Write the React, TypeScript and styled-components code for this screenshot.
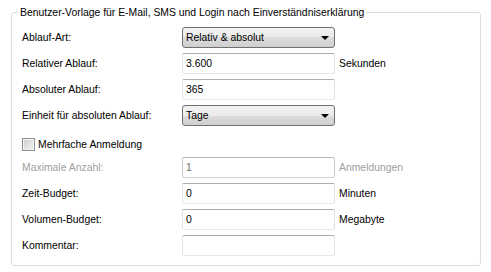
import React from "react";
import styled, { createGlobalStyle } from "styled-components";

const GlobalStyle = createGlobalStyle`
  html, body {
    margin: 0;
    padding: 0;
    background: #fff;
  }
  body {
    font-family: "Liberation Sans", Arial, sans-serif;
    font-size: 10.4px;
    color: #000;
  }
`;

type Row =
  | { kind: "select"; label: string; value: string }
  | { kind: "input"; label: string; value: string; unit?: string; disabled?: boolean }
  | { kind: "check"; label: string };

const rows: Row[] = [
  { kind: "select", label: "Ablauf-Art:", value: "Relativ & absolut" },
  { kind: "input", label: "Relativer Ablauf:", value: "3.600", unit: "Sekunden" },
  { kind: "input", label: "Absoluter Ablauf:", value: "365" },
  { kind: "select", label: "Einheit für absoluten Ablauf:", value: "Tage" },
  { kind: "check", label: "Mehrfache Anmeldung" },
  { kind: "input", label: "Maximale Anzahl:", value: "1", unit: "Anmeldungen", disabled: true },
  { kind: "input", label: "Zeit-Budget:", value: "0", unit: "Minuten" },
  { kind: "input", label: "Volumen-Budget:", value: "0", unit: "Megabyte" },
  { kind: "input", label: "Kommentar:", value: "" },
];

export default function App() {
  return (
    <Page>
      <GlobalStyle />
      <Group>
        <Legend>Benutzer-Vorlage für E-Mail, SMS und Login nach Einverständniserklärung</Legend>
        <Form>
          {rows.map((row, i) => {
            if (row.kind === "check") {
              return (
                <CheckRow key={i}>
                  <CheckBox />
                  <span>{row.label}</span>
                </CheckRow>
              );
            }
            const disabled = row.kind === "input" && !!row.disabled;
            return (
              <React.Fragment key={i}>
                <Label disabled={disabled}>{row.label}</Label>
                {row.kind === "select" ? (
                  <Combo>
                    <span>{row.value}</span>
                    <Arrow />
                  </Combo>
                ) : (
                  <TextBox disabled={disabled}>{row.value}</TextBox>
                )}
                <Unit disabled={disabled}>{row.kind === "input" ? row.unit : ""}</Unit>
              </React.Fragment>
            );
          })}
        </Form>
      </Group>
    </Page>
  );
}

const Page = styled.div`
  width: 491px;
  height: 272px;
  padding: 6px 0 0 11px;
  box-sizing: border-box;
`;

const Group = styled.fieldset`
  margin: 0;
  width: 470px;
  box-sizing: border-box;
  border: 1px solid #d5dfe5;
  border-radius: 3px;
  padding: 8px 0 9px 10px;
  height: 260px;
`;

const Legend = styled.legend`
  margin-left: -4px;
  padding: 0 2px;
  line-height: 13px;
`;

const Form = styled.div`
  display: grid;
  grid-template-columns: 156px 153px auto;
  grid-auto-rows: 21px;
  row-gap: 5px;
  column-gap: 4px;
  align-items: center;
`;

const Label: any = styled.div<{ disabled?: boolean }>`
  color: ${(p) => (p.disabled ? "#a0a0a0" : "#000")};
  white-space: nowrap;
`;

const Unit: any = styled.div<{ disabled?: boolean }>`
  color: ${(p) => (p.disabled ? "#a0a0a0" : "#000")};
  white-space: nowrap;
`;

const TextBox: any = styled.div<{ disabled?: boolean }>`
  height: 21px;
  box-sizing: border-box;
  border: 1px solid;
  border-radius: 2px;
  border-color: ${(p) =>
    p.disabled ? "#b4b4b4 #c8c8c8 #d0d0d0 #c8c8c8" : "#abadb3 #dbdfe6 #e3e9ef #e2e3ea"};
  background: #fff;
  color: ${(p) => (p.disabled ? "#6d6d6d" : "#000")};
  padding: 0 3px;
  line-height: 19px;
`;

const Combo = styled.div`
  height: 21px;
  box-sizing: border-box;
  border: 1px solid #707070;
  border-radius: 3px;
  background: linear-gradient(#f2f2f2 0%, #ebebeb 50%, #dddddd 50%, #cfcfcf 100%);
  display: flex;
  align-items: center;
  justify-content: space-between;
  padding: 0 5px 0 3px;
  line-height: 19px;
`;

const Arrow = styled.span`
  width: 0;
  height: 0;
  border-left: 4px solid transparent;
  border-right: 4px solid transparent;
  border-top: 4px solid #000;
`;

const CheckRow = styled.div`
  grid-column: 1 / -1;
  display: flex;
  align-items: center;
  gap: 3px;
  padding-top: 5px;
`;

const CheckBox = styled.span`
  width: 13px;
  height: 13px;
  box-sizing: border-box;
  border: 1px solid #8e8f8f;
  background: linear-gradient(135deg, #cbcbcb 0%, #e6e6e6 60%, #f4f4f4 100%);
  box-shadow: inset 0 0 0 1px #f4f4f4;
`;
